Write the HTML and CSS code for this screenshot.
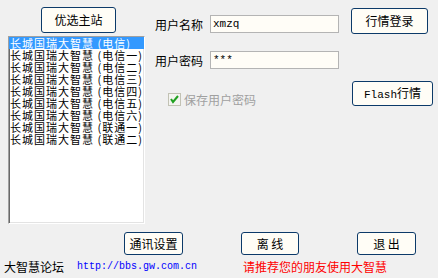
FILE: index.html
```html
<!DOCTYPE html>
<html lang="zh">
<head>
    <meta charset="UTF-8">
    <title>大智慧登录</title>
    <link rel="stylesheet" href="styles.css">
</head>
<body>

<div class="dialog">
    <div class="top">
        <div class="left">
            <button class="btn btn-main">优选主站</button>
            <div class="listbox">
                <div class="item selected">长城国瑞大智慧 (电信)</div>
                <div class="item">长城国瑞大智慧 (电信一)</div>
                <div class="item">长城国瑞大智慧 (电信二)</div>
                <div class="item">长城国瑞大智慧 (电信三)</div>
                <div class="item">长城国瑞大智慧 (电信四)</div>
                <div class="item">长城国瑞大智慧 (电信五)</div>
                <div class="item">长城国瑞大智慧 (电信六)</div>
                <div class="item">长城国瑞大智慧 (联通一)</div>
                <div class="item">长城国瑞大智慧 (联通二)</div>
            </div>
        </div>

        <div class="form">
            <div class="row">
                <label for="user">用户名称</label>
                <input class="field" id="user" type="text" value="xmzq">
            </div>
            <div class="row row-pass">
                <label for="pass">用户密码</label>
                <input class="field" id="pass" type="text" value="***">
            </div>
            <div class="remember">
                <span class="check">
                    <svg width="11" height="11" viewBox="0 0 11 11">
                        <path d="M2 5 L4 8 L9 2" fill="none" stroke="#21a121" stroke-width="2"/>
                    </svg>
                </span>
                <span>保存用户密码</span>
            </div>
        </div>

        <div class="right">
            <button class="btn btn-login">行情登录</button>
            <button class="btn btn-flash"><span class="mono">Flash</span>行情</button>
        </div>
    </div>

    <div class="actions">
        <button class="btn btn-setup">通讯设置</button>
        <button class="btn btn-off">离&nbsp;线</button>
        <button class="btn btn-exit">退&nbsp;出</button>
    </div>

    <div class="footer">
        <span class="forum">大智慧论坛</span>
        <span class="url">http://bbs.gw.com.cn</span>
        <span class="tip">请推荐您的朋友使用大智慧</span>
    </div>
</div>

</body>
</html>
```

FILE: styles.css
```css
body {
    margin: 0;
    background-color: #f0f0f0;
    font-family: "Noto Sans CJK SC", sans-serif;
    font-size: 12px;
    color: #000;
}

.dialog {
    width: 438px;
    height: 278px;
    overflow: hidden;
}

.top {
    display: flex;
}

.btn {
    padding: 0;
    font-family: inherit;
    font-size: 12px;
    color: #000;
    background-color: #fffdf6;
    border: 1px solid #0c3a69;
    border-radius: 3px;
    line-height: 14px;
}

.mono {
    font-family: "Liberation Mono", monospace;
    font-size: 11px;
}

/* left column: main server button and server list */
.left {
    margin-left: 8px;
    width: 137px;
    display: flex;
    flex-direction: column;
}

.btn-main {
    margin: 7px 0 0 33px;
    width: 75px;
    height: 26px;
}

.listbox {
    margin-top: 3px;
    height: 188px;
    box-sizing: border-box;
    background-color: #fff;
    border: 1px solid;
    border-color: #a0a0a0 #fff #fff #a0a0a0;
    box-shadow: inset 1px 1px #696969, inset -1px -1px #e3e3e3;
    overflow: hidden;
}

.item {
    height: 12px;
    line-height: 12px;
    font-size: 11px;
    letter-spacing: 1px;
    padding-left: 1px;
    white-space: nowrap;
}

.item.selected {
    background-color: #3399ff;
    color: #fff;
}

/* middle column: user name / password */
.form {
    margin-left: 10px;
}

.row {
    display: flex;
    align-items: center;
    margin-top: 15px;
}

.row label {
    width: 55px;
}

.row-pass {
    margin-top: 18px;
}

.field {
    width: 129px;
    height: 18px;
    box-sizing: border-box;
    border: 1px solid #b4b4b4;
    background-color: #fffdf7;
    padding: 0 2px;
    font-family: "Liberation Mono", monospace;
    font-size: 11px;
    outline: none;
}

.remember {
    display: flex;
    align-items: center;
    margin: 22px 0 0 13px;
    color: #a0a0a0;
}

.check {
    width: 13px;
    height: 13px;
    box-sizing: border-box;
    border: 1px solid #c2c2b4;
    background-color: #f4f4f0;
    display: flex;
    align-items: center;
    justify-content: center;
    margin-right: 3px;
}

/* right column */
.right {
    margin-left: 12px;
    display: flex;
    flex-direction: column;
    align-items: flex-start;
}

.btn-login {
    margin-top: 8px;
    width: 77px;
    height: 26px;
}

.btn-flash {
    margin: 47px 0 0 1px;
    width: 81px;
    height: 25px;
}

/* bottom buttons */
.actions {
    display: flex;
    margin-top: 8px;
}

.actions .btn {
    height: 23px;
}

.btn-setup {
    margin-left: 124px;
    width: 59px;
}

.btn-off {
    margin-left: 58px;
    width: 58px;
}

.btn-exit {
    margin-left: 58px;
    width: 59px;
}

.footer {
    display: flex;
    align-items: center;
    margin-top: 5px;
    height: 14px;
    line-height: 14px;
    white-space: nowrap;
}

.forum {
    margin-left: 4px;
}

.url {
    margin-left: 13px;
    color: #0000ff;
    font-family: "Liberation Mono", monospace;
    font-size: 10px;
}

.tip {
    margin-left: 46px;
    color: #ff0000;
}
```
